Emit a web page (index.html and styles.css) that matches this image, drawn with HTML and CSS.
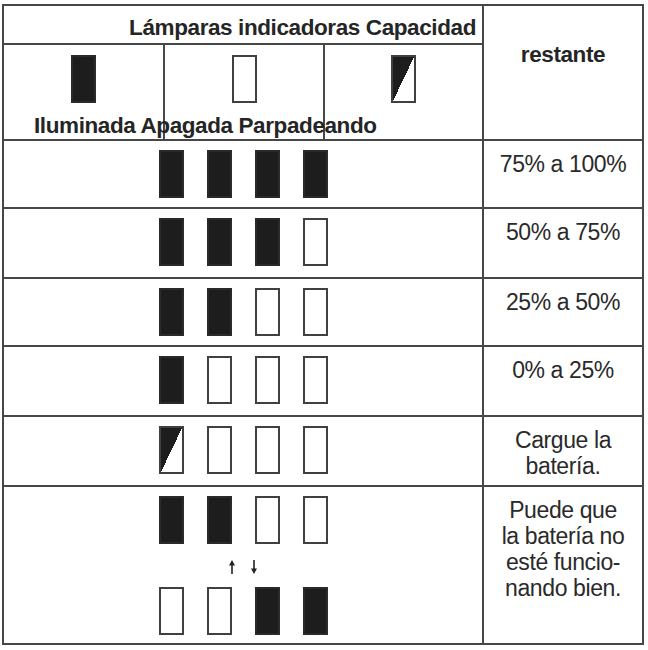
FILE: index.html
```html
<!DOCTYPE html>
<html lang="es">
<head>
<meta charset="utf-8">
<title>Lámparas indicadoras</title>
<link rel="stylesheet" href="styles.css">
</head>
<body>
<div class="chart">
  <div class="head-left">Lámparas indicadoras Capacidad</div>
  <div class="head-right">restante</div>
  <div class="legend">
    <div class="leg-cell c1"><span class="lamp on"></span></div>
    <div class="leg-cell c2"><span class="lamp"></span></div>
    <div class="leg-cell c3"><span class="lamp blink"></span></div>
    <div class="leg-labels">Iluminada Apagada Parpadeando</div>
  </div>

  <div class="lamps"><span class="lamp on"></span><span class="lamp on"></span><span class="lamp on"></span><span class="lamp on"></span></div>
  <div class="val">75% a 100%</div>

  <div class="lamps"><span class="lamp on"></span><span class="lamp on"></span><span class="lamp on"></span><span class="lamp"></span></div>
  <div class="val">50% a 75%</div>

  <div class="lamps"><span class="lamp on"></span><span class="lamp on"></span><span class="lamp"></span><span class="lamp"></span></div>
  <div class="val">25% a 50%</div>

  <div class="lamps"><span class="lamp on"></span><span class="lamp"></span><span class="lamp"></span><span class="lamp"></span></div>
  <div class="val">0% a 25%</div>

  <div class="lamps"><span class="lamp blink"></span><span class="lamp"></span><span class="lamp"></span><span class="lamp"></span></div>
  <div class="val">Cargue la<br>batería.</div>

  <div class="lamps stack last-row">
    <div class="lamp-row"><span class="lamp on"></span><span class="lamp on"></span><span class="lamp"></span><span class="lamp"></span></div>
    <div class="arrows">
      <svg width="8" height="14" viewBox="0 0 8 14"><line x1="4" y1="14" x2="4" y2="4" stroke="#222" stroke-width="1.6"/><polygon points="1,5.5 4,0 7,5.5" fill="#222"/></svg>
      <svg width="8" height="14" viewBox="0 0 8 14"><line x1="4" y1="0" x2="4" y2="10" stroke="#222" stroke-width="1.6"/><polygon points="1,8.5 4,14 7,8.5" fill="#222"/></svg>
    </div>
    <div class="lamp-row"><span class="lamp"></span><span class="lamp"></span><span class="lamp on"></span><span class="lamp on"></span></div>
  </div>
  <div class="val last-row">Puede que<br>la batería no<br>esté funcio-<br>nando bien.</div>
</div>
</body>
</html>
```
FILE: styles.css
```css
html, body {
  margin: 0;
  padding: 0;
  background: #fff;
}

body {
  font-family: "Liberation Sans", Arial, sans-serif;
  color: #252525;
}

.chart {
  display: grid;
  grid-template-columns: 480px 1fr;
  grid-template-rows: 39px 96px 68px 70px 68px 70px 70px 1fr;
  width: 642px;
  height: 641px;
  margin: 4px 0 0 2px;
  border: 2px solid #474747;
  box-sizing: border-box;
}

.chart > div {
  box-sizing: border-box;
  border-bottom: 2px solid #474747;
}

.chart > .last-row {
  border-bottom: none;
}

.head-left {
  border-right: 2px solid #474747;
  font-weight: bold;
  font-size: 22.5px;
  letter-spacing: -0.4px;
  line-height: 24px;
  text-align: right;
  padding: 10px 6px 0 0;
  white-space: nowrap;
}

.head-right {
  grid-row: 1 / 3;
  grid-column: 2;
  font-weight: bold;
  font-size: 22.5px;
  letter-spacing: -0.4px;
  line-height: 26px;
  text-align: center;
  padding-top: 36px;
}

.legend {
  border-right: 2px solid #474747;
  display: grid;
  grid-template-columns: 161px 160px 157px;
  grid-template-rows: 1fr;
}

.leg-cell {
  grid-row: 1;
  border-right: 2px solid #474747;
  display: flex;
  justify-content: center;
  align-items: flex-start;
  padding-top: 10px;
}

.leg-cell.c1 { grid-column: 1; }
.leg-cell.c2 { grid-column: 2; }
.leg-cell.c3 { grid-column: 3; border-right: none; }

.leg-labels {
  grid-row: 1;
  grid-column: 1 / -1;
  align-self: end;
  font-weight: bold;
  font-size: 22.5px;
  letter-spacing: -0.4px;
  line-height: 24px;
  padding: 0 0 1px 30px;
  white-space: nowrap;
}

.lamp {
  display: block;
  width: 25px;
  height: 48px;
  box-sizing: border-box;
  border: 2px solid #404040;
  background: #fff;
  flex: none;
}

.lamp.on {
  background: #1d1d1d;
  border-color: #2a2a2a;
}

.lamp.blink {
  background: linear-gradient(to bottom right, #1d1d1d 50%, #fff 50%);
}

.lamps {
  border-right: 2px solid #474747;
  display: flex;
  align-items: flex-start;
  gap: 23px;
  padding: 9px 0 0 155px;
}

.lamps.stack {
  flex-direction: column;
  gap: 0;
}

.lamp-row {
  display: flex;
  gap: 23px;
}

.arrows {
  display: flex;
  gap: 14px;
  margin: 16px 0 13px 69px;
}

.arrows svg {
  display: block;
}

.val {
  font-size: 23px;
  letter-spacing: -0.4px;
  line-height: 26px;
  text-align: center;
  padding-top: 10px;
  color: #2a2a2a;
}
```
